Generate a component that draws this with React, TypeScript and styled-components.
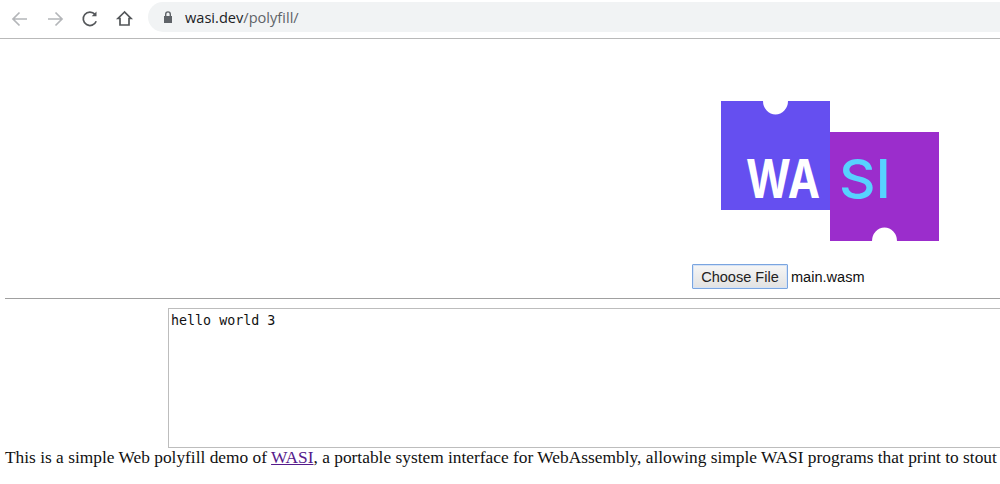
import styled, { createGlobalStyle } from "styled-components";

const GlobalStyle = createGlobalStyle`
  html, body {
    margin: 0;
    padding: 0;
    background: #fff;
    overflow: hidden;
  }
  body {
    width: 1000px;
    height: 484px;
    font-family: "Liberation Serif", serif;
  }
`;

const Toolbar = styled.header`
  display: flex;
  align-items: center;
  height: 38px;
  box-sizing: content-box;
  border-bottom: 1px solid #b9b9b9;
  background: #fff;
`;

const NavIcon = styled.svg<{ $faded?: boolean }>`
  flex: none;
  width: 20px;
  height: 20px;
  fill: none;
  stroke: ${(p) => (p.$faded ? "#b4b6b9" : "#54575a")};
  stroke-width: 1.7;
`;

const NavGroup = styled.nav`
  display: flex;
  align-items: center;
  gap: 15px;
  padding: 0 13px 0 10px;
`;

const Omnibox = styled.div`
  display: flex;
  align-items: center;
  flex: 1;
  height: 30px;
  margin-top: -4px;
  padding-left: 14px;
  gap: 11px;
  border-radius: 15px 0 0 15px;
  background: #f1f3f4;
  font-family: "Open Sans", sans-serif;
  font-size: 14.6px;
  color: #5f6368;
`;

const Host = styled.span`
  color: #202124;
`;

const Main = styled.main`
  padding-left: 5px;
`;

const Upload = styled.section`
  display: flex;
  flex-direction: column;
  align-items: flex-start;
  padding: 61px 0 9px 687px;
`;

const Logo = styled.svg`
  display: block;
  width: 220px;
  height: 142px;
  margin: 0 0 22px 28px;
`;

const FileRow = styled.div`
  display: flex;
  align-items: center;
  gap: 3px;
  font-family: "Liberation Sans", sans-serif;
  font-size: 14.55px;
  color: #111;
`;

const ChooseButton = styled.button`
  box-sizing: border-box;
  width: 96px;
  height: 25px;
  padding: 0;
  border: 1px solid #7aa5e0;
  border-radius: 1px;
  box-shadow: inset 0 0 0 1px #d5e2f5;
  background: linear-gradient(#f6f6f6, #e2e2e2);
  font: inherit;
  color: #222;
`;

const Rule = styled.hr`
  margin: 0 0 9px;
  border: 0;
  border-top: 1px solid #a0a0a0;
`;

const Output = styled.textarea`
  display: block;
  box-sizing: border-box;
  width: 900px;
  height: 140px;
  margin: 0 0 0 163px;
  padding: 4px 2px;
  border: 1px solid #bdbdbd;
  border-radius: 0;
  outline: none;
  resize: none;
  font-family: "DejaVu Sans Mono", monospace;
  font-size: 13.33px;
  line-height: 16px;
  color: #111;
`;

const Intro = styled.p`
  margin: -1px 0 0;
  font-size: 17.38px;
  line-height: 21px;
  white-space: nowrap;
  color: #111;
`;

const IntroLink = styled.a`
  color: #551a8b;
  text-decoration: underline;
`;

const WasiLogo = () => (
  <Logo viewBox="0 0 220 142">
    <path
      d="M1 1H43A12.5 13.5 0 0 0 68 1H110V110H1Z"
      fill="#654ff0"
    />
    <path
      d="M110 32H219V141H177A12.5 13.5 0 0 0 152 141H110Z"
      fill="#9b2dcc"
    />
    <text
      x="26"
      y="98"
      fontFamily="Inter, sans-serif"
      fontSize="53"
      fontWeight="700"
      fill="#fff"
      textLength="74"
      lengthAdjust="spacingAndGlyphs"
    >
      WA
    </text>
    <text
      x="119"
      y="98"
      fontFamily="Inter, sans-serif"
      fontSize="53"
      fontWeight="500"
      fill="#57d2ff"
      textLength="52"
      lengthAdjust="spacingAndGlyphs"
    >
      SI
    </text>
  </Logo>
);

const App = () => {
  return (
    <>
      <GlobalStyle />
      <Toolbar>
        <NavGroup>
          <NavIcon $faded viewBox="0 0 20 20">
            <path d="M17 10H3.5M9.5 3.5 3 10l6.5 6.5" />
          </NavIcon>
          <NavIcon $faded viewBox="0 0 20 20">
            <path d="M3 10h13.5M10.5 3.5 17 10l-6.5 6.5" />
          </NavIcon>
          <NavIcon viewBox="0 0 20 20">
            <path d="M16.2 12.2A6.7 6.7 0 1 1 15 5.4" />
            <path d="M16.5 2.5v4.8h-4.8" fill="#54575a" stroke="none" />
          </NavIcon>
          <NavIcon viewBox="0 0 20 20">
            <path d="M9.5 3 3 9.5h2V16h9V9.5h2Z" />
          </NavIcon>
        </NavGroup>
        <Omnibox>
          <svg width="12" height="14" viewBox="0 0 12 14">
            <path
              d="M3 6V4.2a3 3 0 0 1 6 0V6h1v7H2V6Zm1.4 0h3.2V4.2a1.6 1.6 0 0 0-3.2 0Z"
              fill="#5f6368"
            />
          </svg>
          <span>
            <Host>wasi.dev</Host>/polyfill/
          </span>
        </Omnibox>
      </Toolbar>
      <Main>
        <Upload>
          <WasiLogo />
          <FileRow>
            <ChooseButton type="button">Choose File</ChooseButton>
            <span>main.wasm</span>
          </FileRow>
        </Upload>
        <Rule />
        <Output readOnly value="hello world 3" />
        <Intro>
          This is a simple Web polyfill demo of{" "}
          <IntroLink href="#wasi">WASI</IntroLink>, a portable system interface
          for WebAssembly, allowing simple WASI programs that print to stout
        </Intro>
      </Main>
    </>
  );
};

export default App;
